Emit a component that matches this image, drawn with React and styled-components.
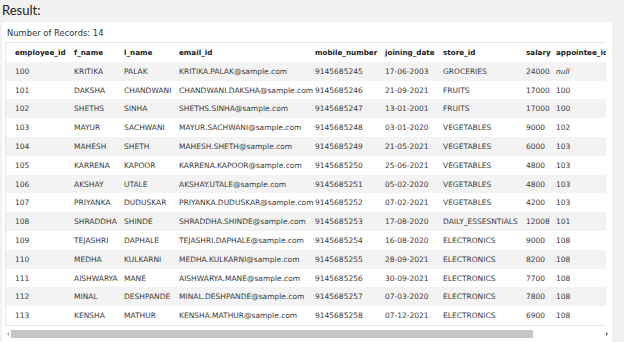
import React from "react";
import styled, { createGlobalStyle } from "styled-components";

const Global = createGlobalStyle`
  html, body { margin: 0; padding: 0; background: #f1f1f1; }
  body { width: 624px; height: 342px; overflow: hidden; }
`;

const Page = styled.div`
  width: 624px;
  height: 342px;
  display: flex;
  flex-direction: column;
  background: #f1f1f1;
`;

const Title = styled.h2`
  margin: 0;
  height: 22px;
  padding: 2px 0 0 2px;
  box-sizing: border-box;
  font-family: Lato, "Noto Sans", sans-serif;
  font-weight: 400;
  font-size: 13px;
  line-height: 17px;
  color: #222;
`;

const Panel = styled.section`
  margin: 0 12px 0 2px;
  background: #fff;
  padding: 0 0 0 3px;
  display: flex;
  flex-direction: column;
  font-family: "DejaVu Sans", Verdana, sans-serif;
  color: #333;
`;

const Count = styled.div`
  height: 20px;
  font-size: 8.4px;
  line-height: 20px;
  padding: 1px 0 0 2px;
  box-sizing: border-box;
  color: #333;
`;

const TableBox = styled.div`
  width: 601px;
  border: 1px solid #e6e6e6;
  border-right: none;
  overflow: hidden;
  box-sizing: border-box;
`;

const Table = styled.table`
  border-collapse: collapse;
  table-layout: fixed;
  width: 621px;
  font-size: 7.5px;
`;

const Th = styled.th`
  text-align: left;
  font-weight: 700;
  color: #222;
  height: 19px;
  padding: 0 0 0 9px;
  white-space: nowrap;
  font-size: 7.2px;
`;

const Tr = styled.tr`
  background: ${p => (p.$odd ? "#ffffff" : "#f3f3f3")};
  height: 18.8px;
`;

const Td = styled.td`
  padding: 0 0 0 9px;
  white-space: nowrap;
  color: #3a3a3a;
  font-style: ${p => (p.$null ? "italic" : "normal")};
`;

const ScrollBar = styled.div`
  height: 16px;
  display: flex;
  align-items: center;
  padding: 0 4px 0 2px;
  gap: 2px;
`;

const Arrow = styled.span`
  width: 0;
  height: 0;
  border-top: 2px solid transparent;
  border-bottom: 2px solid transparent;
  ${p => (p.$dir === "left" ? "border-right: 2px solid #a0a0a0;" : "border-left: 2px solid #606060;")}
`;

const Track = styled.div`
  flex: 1;
  height: 8px;
  display: flex;
`;

const Thumb = styled.div`
  height: 100%;
  background: #c6c6c6;
`;

const cols = [59, 50, 55, 136, 70, 58, 83, 30, 80];
const headers = ["employee_id", "f_name", "l_name", "email_id", "mobile_number", "joining_date", "store_id", "salary", "appointee_id"];

const rows = [
  ["100", "KRITIKA", "PALAK", "KRITIKA.PALAK@sample.com", "9145685245", "17-06-2003", "GROCERIES", "24000", null],
  ["101", "DAKSHA", "CHANDWANI", "CHANDWANI.DAKSHA@sample.com", "9145685246", "21-09-2021", "FRUITS", "17000", "100"],
  ["102", "SHETHS", "SINHA", "SHETHS.SINHA@sample.com", "9145685247", "13-01-2001", "FRUITS", "17000", "100"],
  ["103", "MAYUR", "SACHWANI", "MAYUR.SACHWANI@sample.com", "9145685248", "03-01-2020", "VEGETABLES", "9000", "102"],
  ["104", "MAHESH", "SHETH", "MAHESH.SHETH@sample.com", "9145685249", "21-05-2021", "VEGETABLES", "6000", "103"],
  ["105", "KARRENA", "KAPOOR", "KARRENA.KAPOOR@sample.com", "9145685250", "25-06-2021", "VEGETABLES", "4800", "103"],
  ["106", "AKSHAY", "UTALE", "AKSHAY.UTALE@sample.com", "9145685251", "05-02-2020", "VEGETABLES", "4800", "103"],
  ["107", "PRIYANKA", "DUDUSKAR", "PRIYANKA.DUDUSKAR@sample.com", "9145685252", "07-02-2021", "VEGETABLES", "4200", "103"],
  ["108", "SHRADDHA", "SHINDE", "SHRADDHA.SHINDE@sample.com", "9145685253", "17-08-2020", "DAILY_ESSESNTIALS", "12008", "101"],
  ["109", "TEJASHRI", "DAPHALE", "TEJASHRI.DAPHALE@sample.com", "9145685254", "16-08-2020", "ELECTRONICS", "9000", "108"],
  ["110", "MEDHA", "KULKARNI", "MEDHA.KULKARNI@sample.com", "9145685255", "28-09-2021", "ELECTRONICS", "8200", "108"],
  ["111", "AISHWARYA", "MANE", "AISHWARYA.MANE@sample.com", "9145685256", "30-09-2021", "ELECTRONICS", "7700", "108"],
  ["112", "MINAL", "DESHPANDE", "MINAL.DESHPANDE@sample.com", "9145685257", "07-03-2020", "ELECTRONICS", "7800", "108"],
  ["113", "KENSHA", "MATHUR", "KENSHA.MATHUR@sample.com", "9145685258", "07-12-2021", "ELECTRONICS", "6900", "108"],
];

export default function App() {
  return (
    <Page>
      <Global />
      <Title>Result:</Title>
      <Panel>
        <Count>Number of Records: 14</Count>
        <TableBox>
          <Table>
            <colgroup>
              {cols.map((w, i) => (
                <col key={i} style={{ width: w }} />
              ))}
            </colgroup>
            <thead>
              <Tr $odd>
                {headers.map(h => (
                  <Th key={h}>{h}</Th>
                ))}
              </Tr>
            </thead>
            <tbody>
              {rows.map((r, i) => (
                <Tr key={r[0]} $odd={i % 2 === 1}>
                  {r.map((c, j) => (
                    <Td key={j} $null={c === null}>{c === null ? "null" : c}</Td>
                  ))}
                </Tr>
              ))}
            </tbody>
          </Table>
        </TableBox>
        <ScrollBar>
          <Arrow $dir="left" />
          <Track>
            <Thumb style={{ width: "88%" }} />
          </Track>
          <Arrow $dir="right" />
        </ScrollBar>
      </Panel>
    </Page>
  );
}
